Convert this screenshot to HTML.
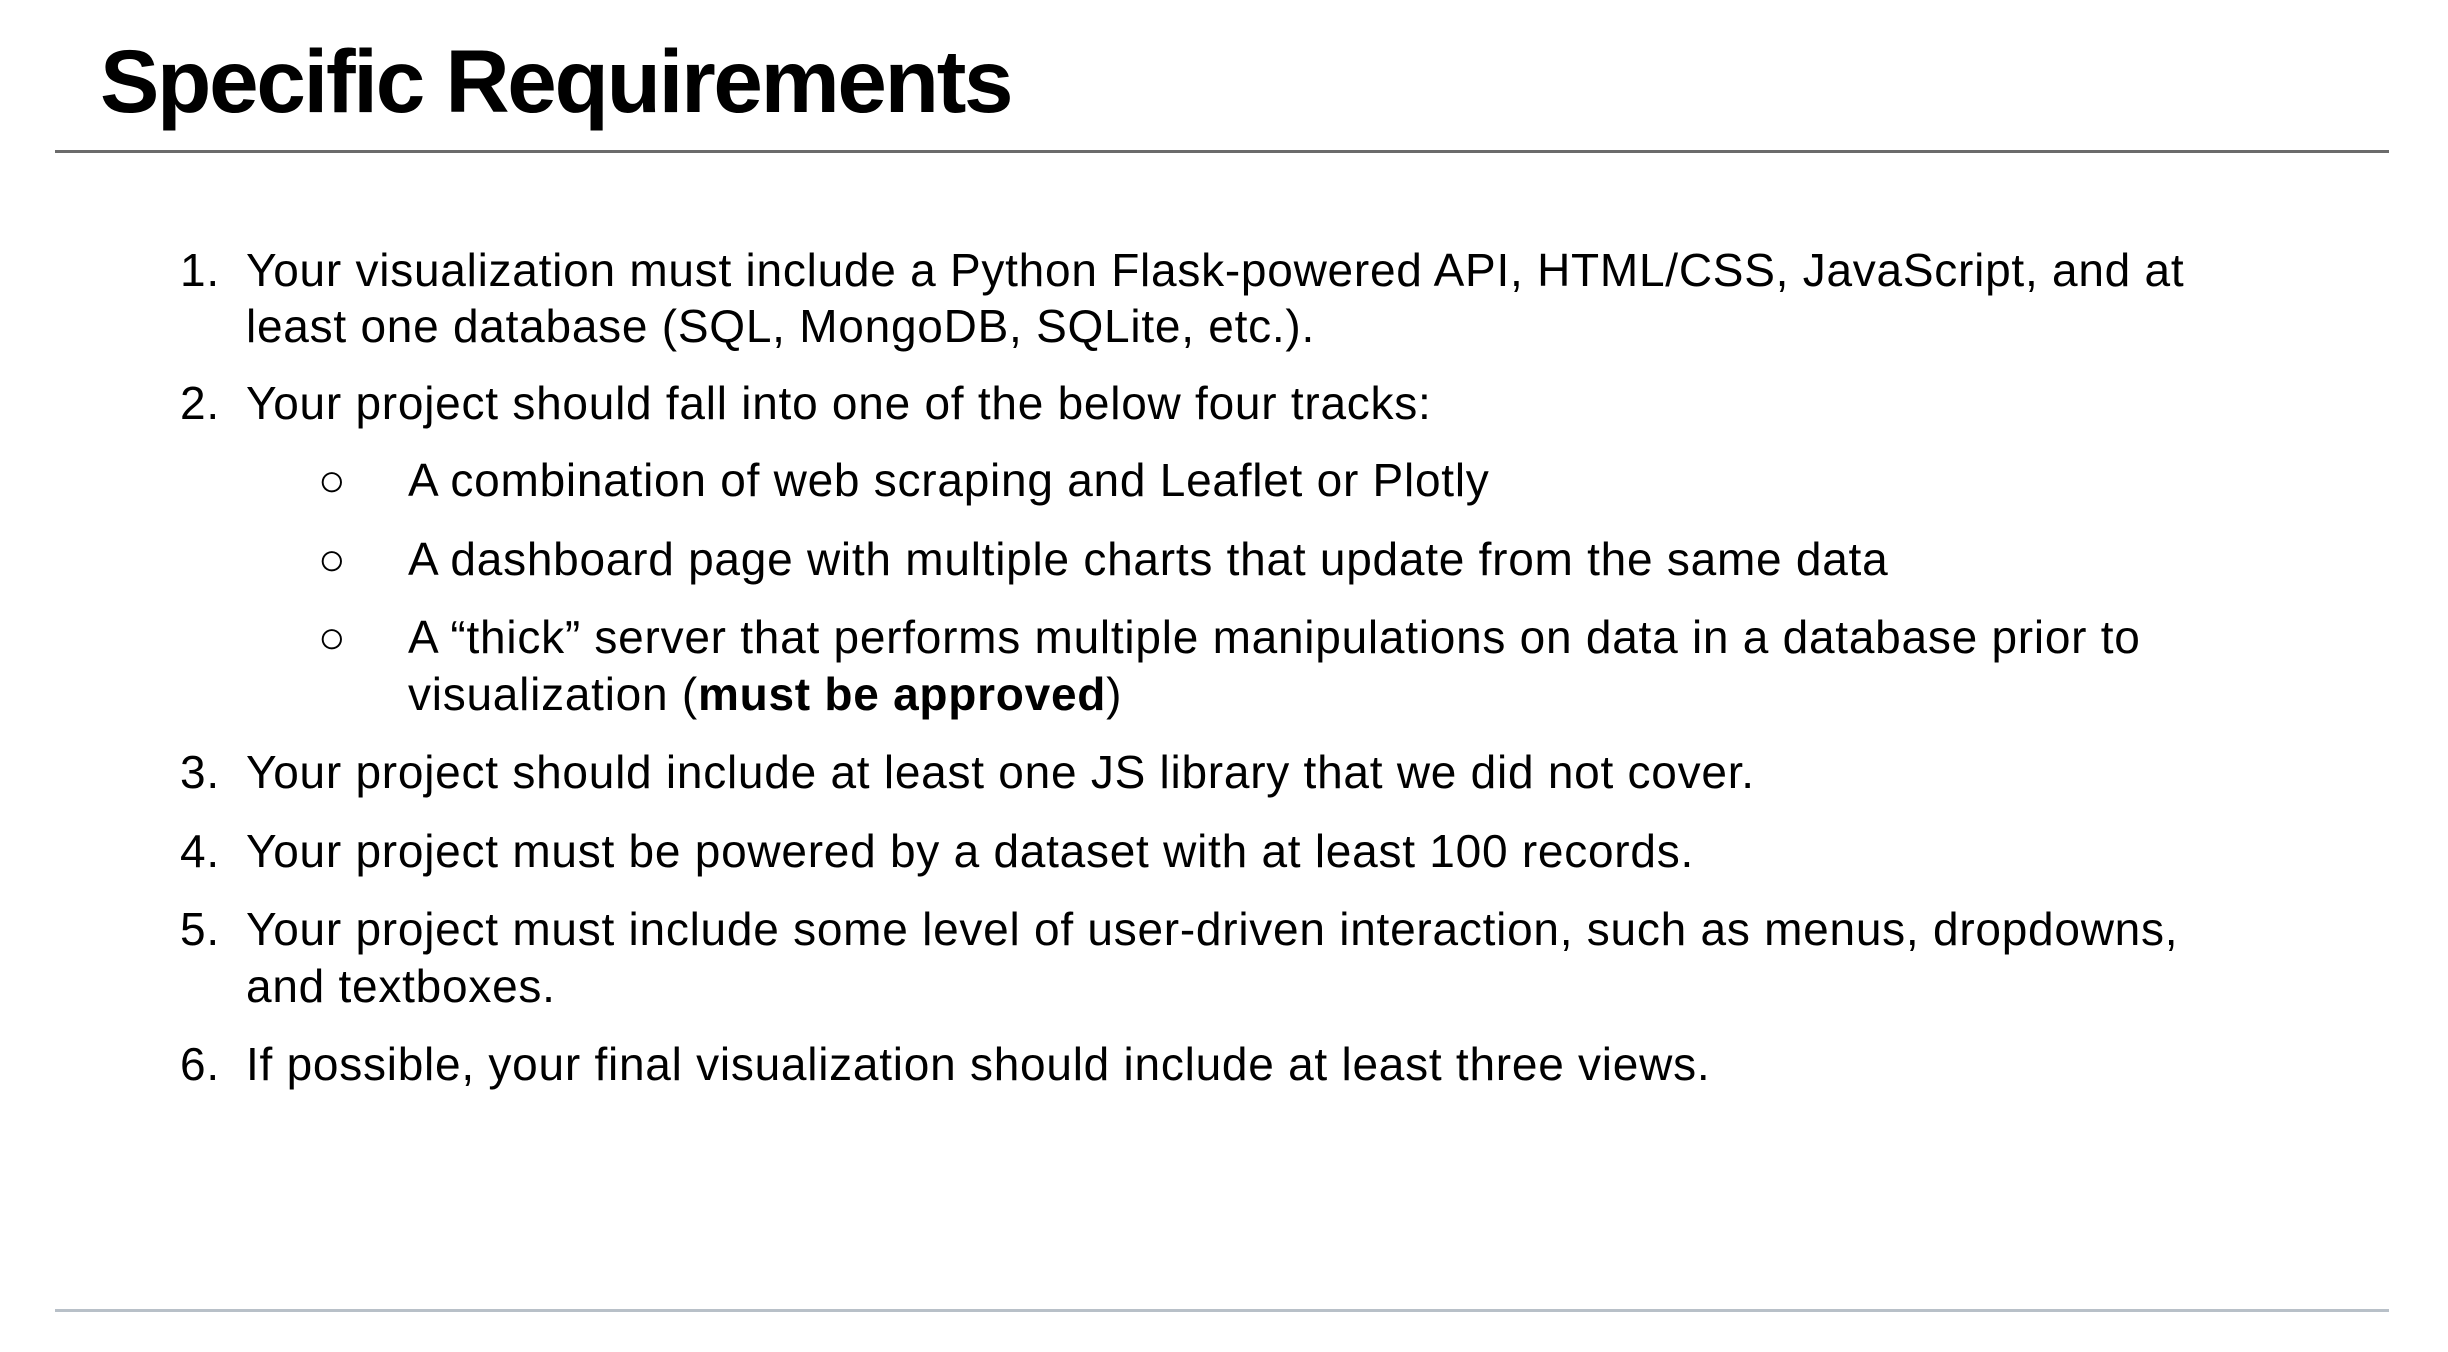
<!DOCTYPE html>
<html><head><meta charset="utf-8"><style>
html,body{margin:0;padding:0;background:#fff;width:2448px;height:1352px;overflow:hidden;position:relative;font-family:"Liberation Sans",Arial,sans-serif;color:#000}
.t{position:absolute;white-space:nowrap;font-size:46px;line-height:46px;letter-spacing:0.75px}
.h{position:absolute;left:100px;top:37px;font-size:89px;line-height:89px;font-weight:bold;letter-spacing:-2.3px;white-space:nowrap}
.r{position:absolute;left:55px;width:2334px;height:3px}
</style></head><body>
<div class="h">Specific Requirements</div>
<div class="r" style="top:150px;background:#6b6b6b"></div>
<div class="r" style="top:1309px;background:#b8c0c8"></div>

<div class="t" style="left:180px;top:247px">1.</div>
<div class="t" style="left:246px;top:247px">Your visualization must include a Python Flask-powered API, HTML/CSS, JavaScript, and at</div>
<div class="t" style="left:246px;top:303px">least one database (SQL, MongoDB, SQLite, etc.).</div>
<div class="t" style="left:180px;top:380px">2.</div>
<div class="t" style="left:246px;top:380px">Your project should fall into one of the below four tracks:</div>
<div class="t" style="left:318px;top:457px">○</div>
<div class="t" style="left:408px;top:457px">A combination of web scraping and Leaflet or Plotly</div>
<div class="t" style="left:318px;top:536px">○</div>
<div class="t" style="left:408px;top:536px">A dashboard page with multiple charts that update from the same data</div>
<div class="t" style="left:318px;top:614px">○</div>
<div class="t" style="left:408px;top:614px">A “thick” server that performs multiple manipulations on data in a database prior to</div>
<div class="t" style="left:408px;top:671px">visualization (<b>must be approved</b>)</div>
<div class="t" style="left:180px;top:749px">3.</div>
<div class="t" style="left:246px;top:749px">Your project should include at least one JS library that we did not cover.</div>
<div class="t" style="left:180px;top:828px">4.</div>
<div class="t" style="left:246px;top:828px">Your project must be powered by a dataset with at least 100 records.</div>
<div class="t" style="left:180px;top:906px">5.</div>
<div class="t" style="left:246px;top:906px">Your project must include some level of user-driven interaction, such as menus, dropdowns,</div>
<div class="t" style="left:246px;top:963px">and textboxes.</div>
<div class="t" style="left:180px;top:1041px">6.</div>
<div class="t" style="left:246px;top:1041px">If possible, your final visualization should include at least three views.</div>
</body></html>
